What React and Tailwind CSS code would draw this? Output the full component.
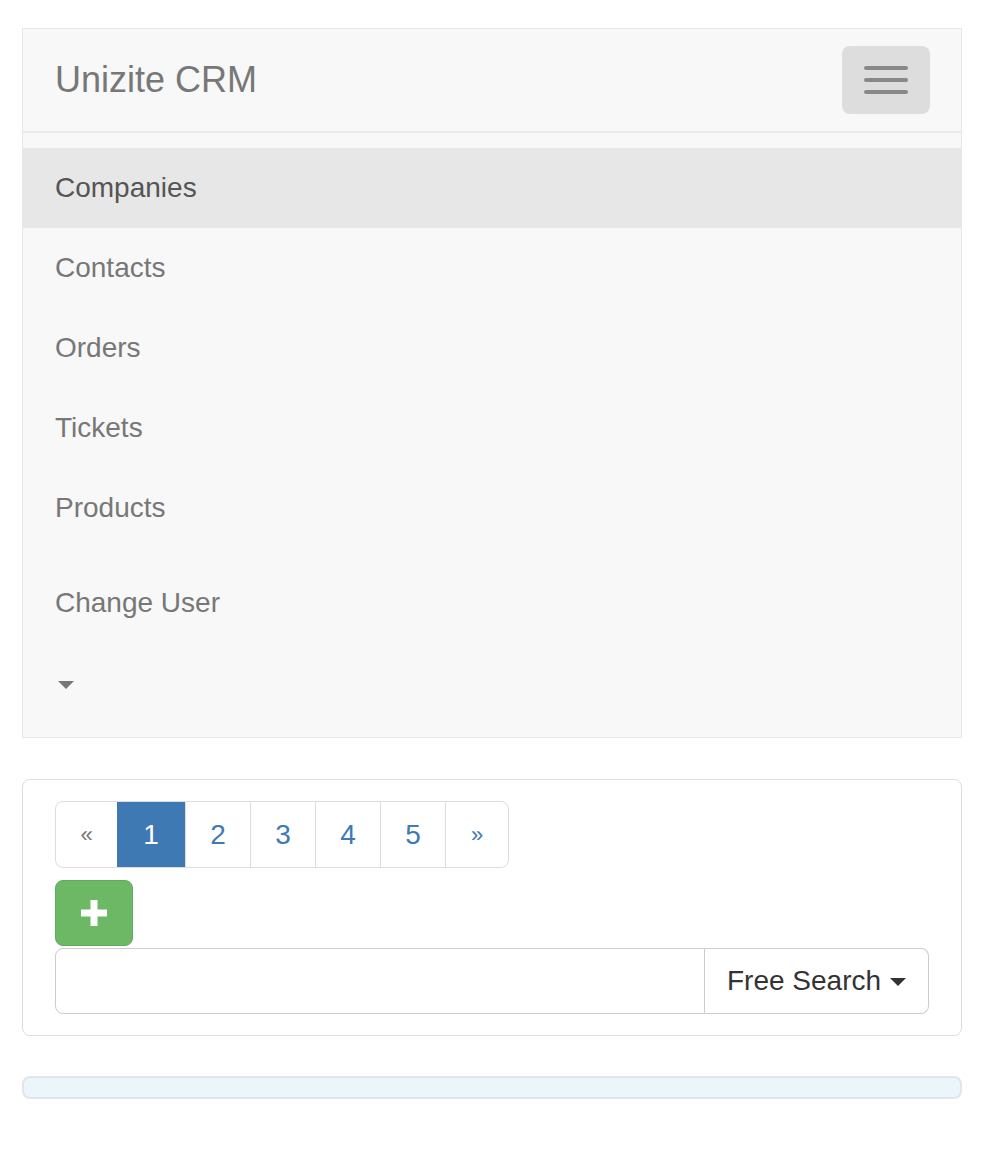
import React from "react";

const navItems = ["Companies", "Contacts", "Orders", "Tickets", "Products"];
const pages = ["1", "2", "3", "4", "5"];

function Caret({ className }) {
  return (
    <svg width="16" height="8" viewBox="0 0 16 8" className={className}>
      <path d="M0 0 L16 0 L8 8 Z" fill="currentColor" />
    </svg>
  );
}

export default function App() {
  return (
    <div
      className="bg-white pl-[22px] pr-[24px] pt-[28px] pb-[52px]"
      style={{ fontFamily: '"Liberation Sans", Arial, sans-serif' }}
    >
      {/* Navbar */}
      <div className="border border-[#e7e7e7] bg-[#f8f8f8]">
        <div className="flex h-[102px] items-center justify-between pl-[32px] pr-[31px]">
          <span className="text-[36px] leading-none text-[#777]">Unizite CRM</span>
          <button className="flex h-[68px] w-[88px] flex-col items-center justify-center gap-[8px] rounded-[8px] bg-[#ddd]">
            <span className="block h-[4px] w-[44px] rounded-full bg-[#888]" />
            <span className="block h-[4px] w-[44px] rounded-full bg-[#888]" />
            <span className="block h-[4px] w-[44px] rounded-full bg-[#888]" />
          </button>
        </div>

        <div className="border-t-2 border-[#eaeaea] pt-[15px] pb-[14px]">
          {navItems.map((item, i) => (
            <div
              key={item}
              className={
                i === 0
                  ? "flex h-[80px] items-center bg-[#e7e7e7] px-[32px] text-[28px] text-[#555]"
                  : "flex h-[80px] items-center px-[32px] text-[28px] text-[#777]"
              }
            >
              {item}
            </div>
          ))}

          <div className="mt-[15px] flex h-[80px] items-center px-[32px] text-[28px] text-[#777]">
            Change User
          </div>
          <div className="flex h-[80px] items-center px-[35px] pt-[4px] text-[#777]">
            <Caret />
          </div>
        </div>
      </div>

      {/* Panel */}
      <div className="mt-[41px] rounded-[8px] border border-[#ddd] bg-white px-[32px] pt-[21px] pb-[21px]">
        <div className="flex">
          <div className="flex h-[67px] overflow-hidden rounded-[8px] border border-[#ddd] text-[28px] text-[#3d7ab6]">
            <span className="flex w-[61px] items-center justify-center text-[22px] text-[#777]">«</span>
            {pages.map((p, i) => (
              <span
                key={p}
                className={
                  i === 0
                    ? "flex w-[68px] items-center justify-center bg-[#3f79b4] text-white"
                    : "flex w-[65px] items-center justify-center border-l border-[#ddd]"
                }
              >
                {p}
              </span>
            ))}
            <span className="flex w-[63px] items-center justify-center border-l border-[#ddd] text-[22px]">»</span>
          </div>
        </div>

        <button className="mt-[12px] flex h-[66px] w-[78px] items-center justify-center rounded-[8px] border border-[#5cae5c] bg-[#6cb864]">
          <svg width="26" height="26" viewBox="0 0 26 26">
            <rect x="9.5" y="0" width="7" height="26" fill="white" />
            <rect x="0" y="9.5" width="26" height="7" fill="white" />
          </svg>
        </button>

        <div className="mt-[2px] flex h-[66px]">
          <input className="min-w-0 flex-1 rounded-l-[8px] border border-[#ccc] bg-white outline-none" />
          <button className="flex w-[224px] items-center justify-center gap-[9px] rounded-r-[8px] border border-l-0 border-[#ccc] bg-white text-[28px] text-[#333]">
            Free Search
            <Caret className="mt-[2px] text-[#333]" />
          </button>
        </div>
      </div>

      {/* Alert */}
      <div className="mt-[40px] h-[23px] rounded-[8px] border-2 border-[#dde8ec] bg-[#ecf6fa]" />
    </div>
  );
}
